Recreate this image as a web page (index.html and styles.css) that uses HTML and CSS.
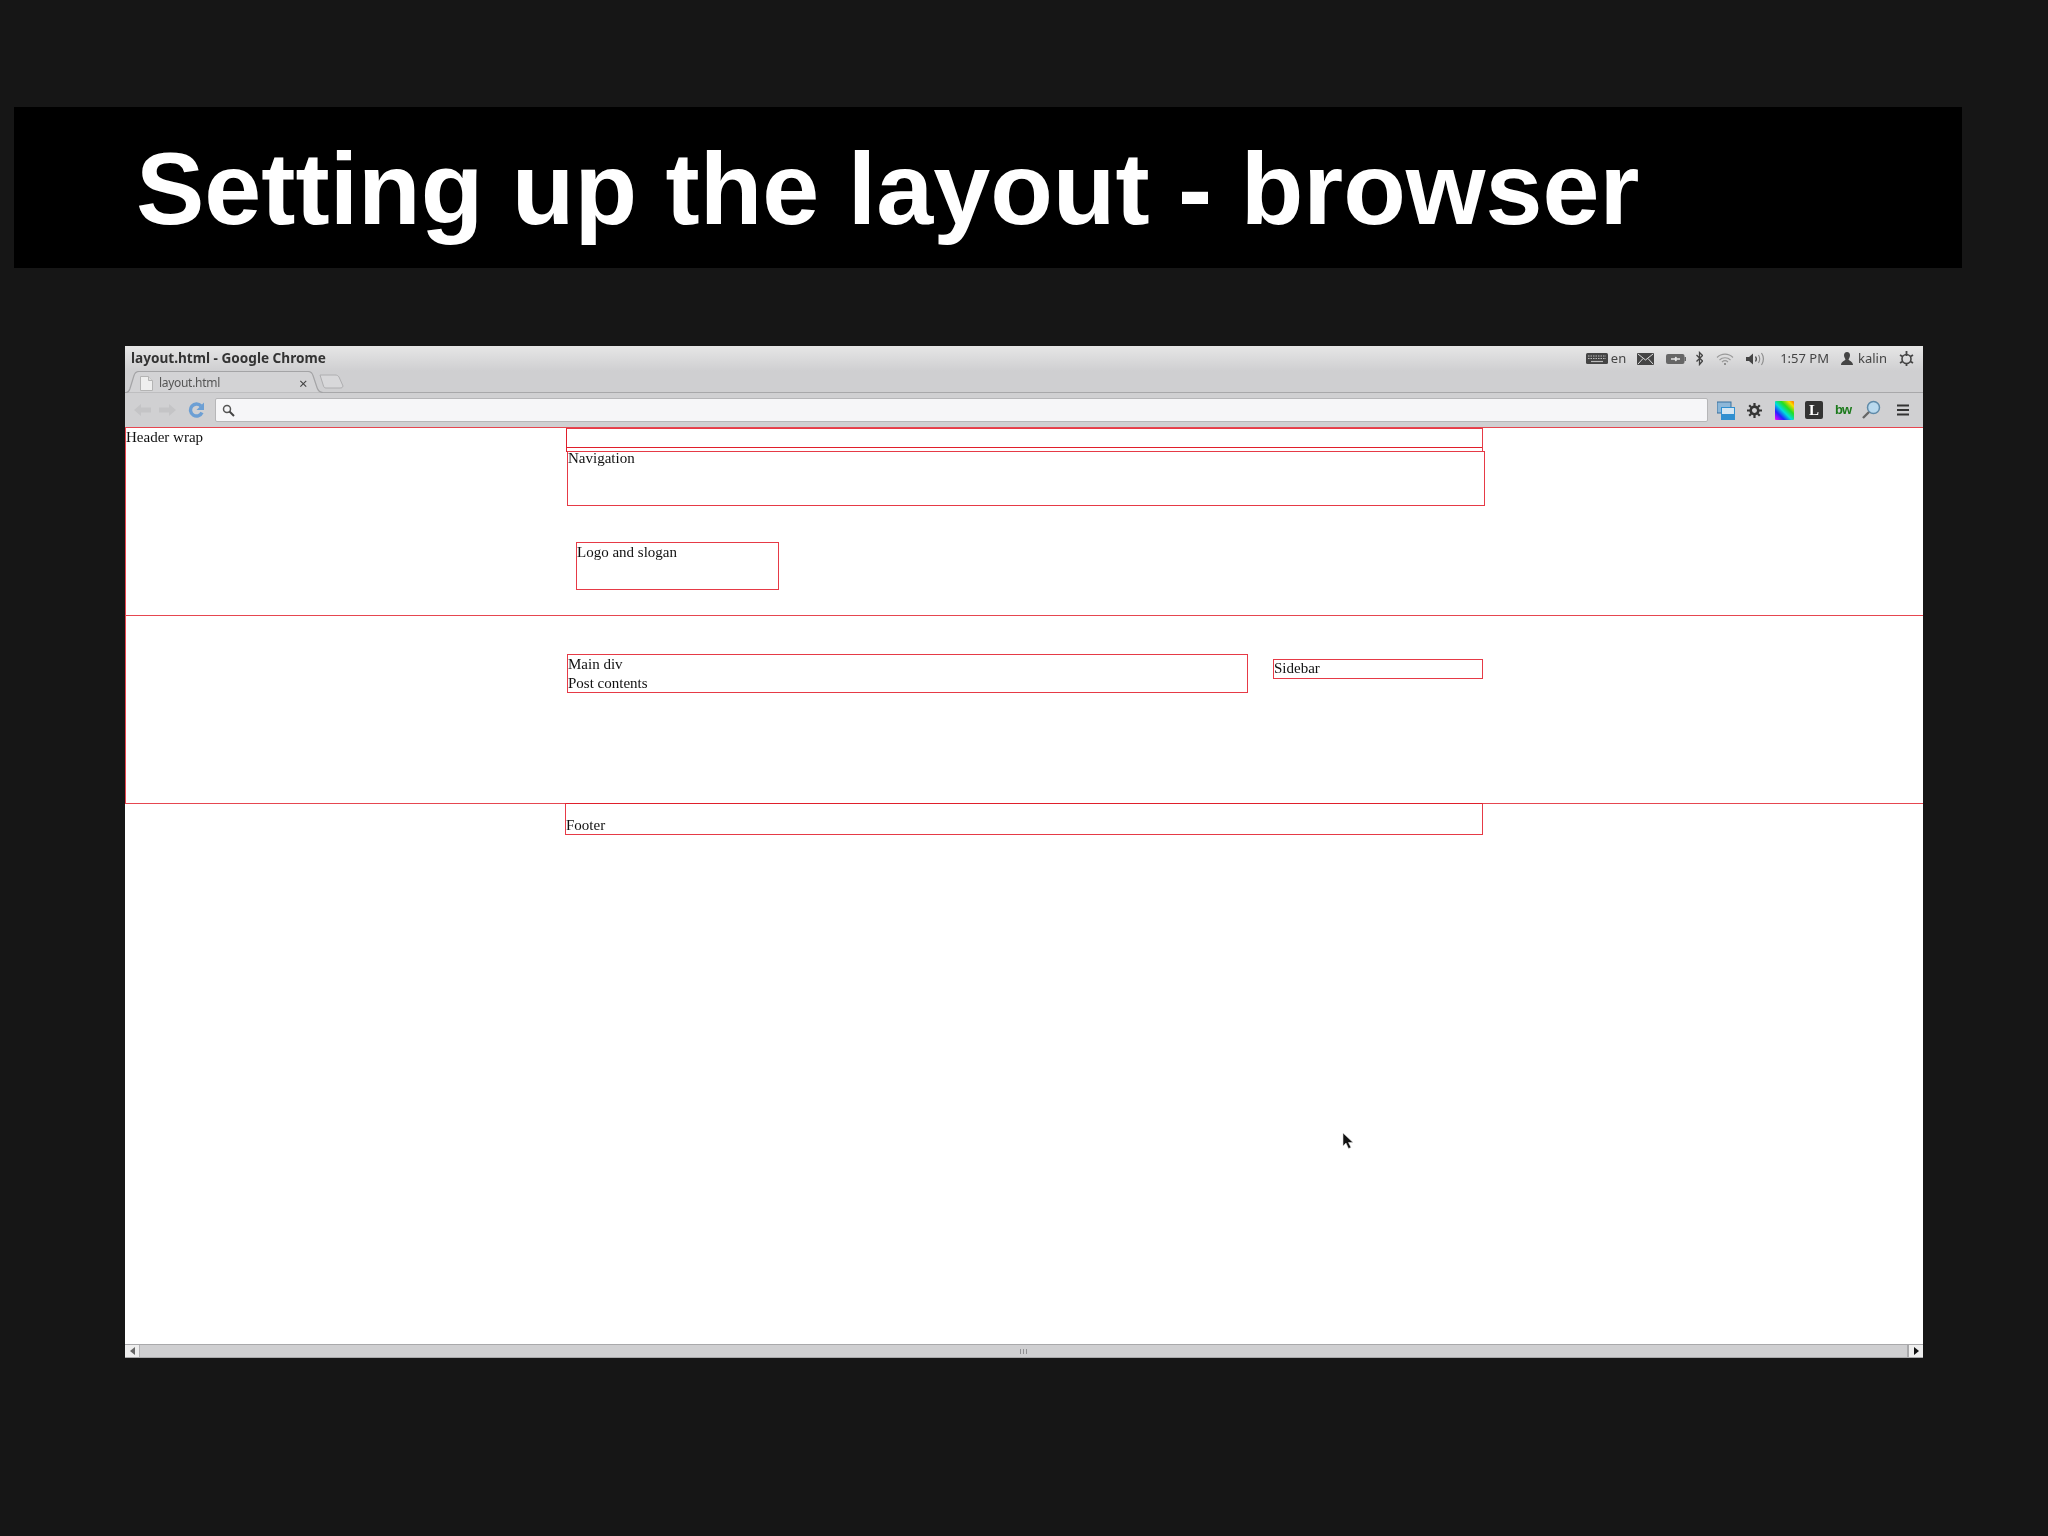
FILE: index.html
```html
<!DOCTYPE html>
<html lang="en">

<head>
    <meta charset="UTF-8">
    <title>Setting up the layout - browser</title>
    <link rel="stylesheet" href="styles.css">
</head>

<body>
    <header class="banner">
        <h1>Setting up the layout - browser</h1>
    </header>

    <section class="window">
        <!-- title bar + system tray -->
        <div class="titlebar">
            <span class="title">layout.html - Google Chrome</span>
            <div class="tray">
                <svg class="t-kbd" width="22" height="11" viewBox="0 0 22 11">
                    <rect width="22" height="11" rx="1.5" fill="#444" />
                    <path d="M2 3h18M2 5.5h18" stroke="#bbb" stroke-width="1" stroke-dasharray="1.5 1" />
                    <path d="M5 8.5h12" stroke="#bbb" stroke-width="1.2" />
                </svg>
                <span class="t-en">en</span>
                <svg class="t-mail" width="17" height="12" viewBox="0 0 17 12">
                    <rect width="17" height="12" rx="1" fill="#444" />
                    <path d="M1 1l7.500 6 7.500-6M1 11l5-5.500M16 11l-5-5.500" stroke="#ddd" stroke-width="1" fill="none" />
                </svg>
                <svg class="t-batt" width="20" height="10" viewBox="0 0 20 10">
                    <rect width="18.500" height="10" rx="2" fill="#666" />
                    <rect x="18.500" y="3" width="1.500" height="4" fill="#666" />
                    <path d="M5 5h4l1-2v2h4l-4 0v2l-1-2z" stroke="#e4e4e4" stroke-width="1.400" fill="none" />
                </svg>
                <svg class="t-bt" width="7" height="15" viewBox="0 0 7 15">
                    <path d="M.5 4l6 6-3 3.500V1.500l3 3-6 6" stroke="#444" stroke-width="1.300" fill="none" />
                </svg>
                <svg class="t-wifi" width="18" height="12" viewBox="0 0 18 12">
                    <path d="M1 4.500c4.500-4.500 11.500-4.500 16 0M3.500 7c3-3 8-3 11 0M6 9c1.800-1.600 4.200-1.600 6 0" stroke="#999" stroke-width="1.100" fill="none" />
                    <circle cx="9" cy="11" r="1" fill="#777" />
                </svg>
                <svg class="t-vol" width="19" height="14" viewBox="0 0 19 14">
                    <path d="M0 5h3l4-3.500v11L3 9H0z" fill="#444" />
                    <path d="M9.500 4.500c1 1.500 1 3.500 0 5" stroke="#444" stroke-width="1.300" fill="none" />
                    <path d="M12.500 3c1.500 2.500 1.500 5.500 0 8M15.500 1c2.500 3.500 2.500 8.500 0 12" stroke="#888" stroke-width="1.100" fill="none" />
                </svg>
                <span class="t-time">1:57 PM</span>
                <svg class="t-user" width="12" height="13" viewBox="0 0 12 13">
                    <path d="M6 0c2 0 3 1.500 3 3.300S8 6.500 7.500 7.500c0 1 4.500 1.800 4.500 5.500H0c0-3.700 4.500-4.500 4.500-5.500C4 6.500 3 5 3 3.300S4 0 6 0z" fill="#444" />
                </svg>
                <span class="t-name">kalin</span>
                <svg class="t-power" width="15" height="15" viewBox="0 0 15 15">
                    <circle cx="7.500" cy="8" r="4.500" stroke="#444" stroke-width="1.600" fill="none" />
                    <path d="M7.500 0v5M1 4l2.500 1.500M14 4l-2.500 1.500M1 12l2.500-1.500M14 12l-2.500-1.500M7.500 13v2" stroke="#444" stroke-width="1.800" />
                </svg>
            </div>
        </div>

        <!-- tabs -->
        <div class="tabstrip">
            <svg class="tab-shape" width="225" height="22" viewBox="0 0 225 22">
                <path d="M0 21.500h1c2 0 3-1 4-4l4-13c1-3 2-4 5-4h169c3 0 4 1 5 4l4 12c1 3 3 5 6 5" fill="#d3d3d5" stroke="#a4a4a6" stroke-width="1.200" />
                <path d="M195 4h15c2 0 3 .6 4 2l4 9c-.5 1.500-1 2-3 2h-14c-1.500 0-2-.7-2.500-2l-3.500-11" fill="#d8d8da" stroke="#aeaeb0" />
            </svg>
            <svg class="favicon" width="13" height="15" viewBox="0 0 13 15">
                <path d="M.5.500h8l4 4v10H.5z" fill="#efefef" stroke="#b4b4b4" />
                <path d="M8.500.500v4h4" fill="#ddd" stroke="#b4b4b4" />
            </svg>
            <span class="tab-label">layout.html</span>
            <span class="tab-close">×</span>
        </div>

        <!-- toolbar -->
        <div class="toolbar">
            <svg class="b-back" width="17" height="14" viewBox="0 0 17 14">
                <path d="M0 7l7-6v3.500h10v5H7V13z" fill="#c4c4c6" />
            </svg>
            <svg class="b-fwd" width="17" height="14" viewBox="0 0 17 14">
                <path d="M17 7l-7-6v3.500H0v5h10V13z" fill="#c4c4c6" />
            </svg>
            <svg class="b-reload" width="16" height="16" viewBox="0 0 16 16">
                <path d="M14 10.500a6 6 0 1 1-1-6.500" stroke="#6c9fd4" stroke-width="3.400" fill="none" />
                <path d="M16 .5v7.500H8.500z" fill="#6c9fd4" />
            </svg>
            <div class="omnibox">
                <svg width="13" height="13" viewBox="0 0 13 13">
                    <circle cx="5" cy="5" r="3.500" stroke="#555" stroke-width="1.500" fill="none" />
                    <path d="M7.500 7.500l4.500 4.500" stroke="#444" stroke-width="2" />
                </svg>
            </div>
            <svg class="e-pic" width="18" height="19" viewBox="0 0 18 19">
                <rect y="1" width="14" height="11" fill="#8db7d8" stroke="#38719f" />
                <rect x="4" y="6" width="14" height="13" fill="#2f8fd0" />
                <rect x="5" y="7" width="12" height="6" fill="#d5e6f2" />
            </svg>
            <svg class="e-gear" width="15" height="15" viewBox="0 0 15 15">
                <circle cx="7.500" cy="7.500" r="3.800" stroke="#333" stroke-width="2.600" fill="none" />
                <path d="M7.500 0v3M7.500 12v3M0 7.500h3M12 7.500h3M2.200 2.200l2 2M10.800 10.800l2 2M12.800 2.200l-2 2M4.200 10.800l-2 2" stroke="#333" stroke-width="2.200" />
            </svg>
            <svg class="e-color" width="19" height="19" viewBox="0 0 19 19">
                <defs>
                    <linearGradient id="rainbow" x1="0" y1="1" x2="1" y2="0">
                        <stop offset="0" stop-color="#f0f" />
                        <stop offset=".25" stop-color="#22f" />
                        <stop offset=".45" stop-color="#0dd" />
                        <stop offset=".65" stop-color="#2d2" />
                        <stop offset=".85" stop-color="#fd0" />
                        <stop offset="1" stop-color="#f60" />
                    </linearGradient>
                </defs>
                <rect width="19" height="19" rx="1" fill="url(#rainbow)" />
            </svg>
            <span class="e-l">L</span>
            <span class="e-bw">bw</span>
            <svg class="e-zoom" width="19" height="20" viewBox="0 0 19 20">
                <circle cx="11.500" cy="7.500" r="6" fill="#b9d9ee" stroke="#5f8aa8" stroke-width="1.500" />
                <path d="M7 12l-6 6" stroke="#666" stroke-width="2.400" />
            </svg>
            <svg class="e-menu" width="12" height="12" viewBox="0 0 12 12">
                <path d="M0 1.500h12M0 6h12M0 10.500h12" stroke="#333" stroke-width="2" />
            </svg>
        </div>

        <!-- page in the browser -->
        <div class="viewport">
            <div class="wrap header-wrap">
                <div class="wrap-label">Header wrap</div>
                <div class="column">
                    <div class="top-bar"><div class="top-bar-inner"></div></div>
                    <div class="box nav"><div class="nav-text">Navigation</div></div>
                    <div class="box logo">Logo and slogan</div>
                </div>
            </div>

            <div class="wrap main-wrap">
                <div class="column main-column">
                    <div class="box main-div">Main div<br>Post contents</div>
                    <div class="box sidebar">Sidebar</div>
                </div>
            </div>

            <div class="box footer">Footer</div>

            <svg class="cursor" width="13" height="18" viewBox="0 0 13 18">
                <path d="M1 1v13l3-3 2.500 5.500 2.500-1L6.500 10.500H11z" fill="#111" stroke="#ddd" stroke-width=".6" />
            </svg>
        </div>

        <!-- bottom scrollbar -->
        <div class="scrollbar">
            <div class="sb-btn"><div class="arrow-left"></div></div>
            <div class="sb-track"><div class="grip"></div></div>
            <div class="sb-btn"><div class="arrow-right"></div></div>
        </div>
    </section>
</body>

</html>
```

FILE: styles.css
```css
* {
    box-sizing: border-box;
}

body {
    margin: 0;
    width: 2048px;
    height: 1536px;
    padding-top: 107px;
    overflow: hidden;
    background-color: #161616;
    font-family: "Liberation Serif", serif;
    font-size: 15px;
    line-height: 18.5px;
    color: #111;
}

/* slide heading */
.banner {
    width: 1948px;
    height: 161px;
    margin-left: 14px;
    padding: 3px 0 0 122px;
    background-color: #000;
    display: flex;
    align-items: center;
}

.banner h1 {
    margin: 0;
    font-family: "Liberation Sans", Arial, sans-serif;
    font-size: 102.5px;
    font-weight: bold;
    line-height: 1;
    color: #fff;
    white-space: nowrap;
}

/* screenshot of the browser */
.window {
    width: 1798px;
    height: 1012px;
    margin: 78px 0 0 125px;
    display: flex;
    flex-direction: column;
    background-color: #fff;
    filter: blur(.4px);
}

.titlebar {
    height: 25px;
    padding: 0 9px 0 6px;
    display: flex;
    align-items: center;
    justify-content: space-between;
    background: linear-gradient(#e6e6e6, #cfcfd1);
    font-family: "Noto Sans", sans-serif;
    font-size: 13px;
    color: #444;
}

.title {
    font-size: 13.6px;
    font-weight: bold;
    color: #333;
}

.tray {
    display: flex;
    align-items: center;
}

.t-en { margin-left: 3px; }
.t-mail { margin-left: 11px; }
.t-batt { margin-left: 12px; }
.t-bt { margin-left: 10px; }
.t-wifi { margin-left: 13px; }
.t-vol { margin-left: 12px; }
.t-time { margin-left: 15px; }
.t-user { margin-left: 12px; }
.t-name { margin-left: 5px; }
.t-power { margin-left: 12px; }

.tabstrip {
    position: relative;
    height: 22px;
    padding-top: 3px;
    display: flex;
    align-items: center;
    background-color: #cfcfd1;
    border-bottom: 1px solid #a8a8aa;
    font-family: "Noto Sans", sans-serif;
    font-size: 12px;
    color: #555;
}

.tab-shape {
    position: absolute;
    left: 0;
    top: 0;
}

.favicon {
    position: relative;
    margin-left: 15px;
}

.tab-label {
    position: relative;
    margin-left: 6px;
    letter-spacing: -.3px;
}

.tab-close {
    position: relative;
    margin-left: 79px;
    font-size: 15px;
    color: #444;
}

.toolbar {
    height: 34px;
    padding-right: 14px;
    display: flex;
    align-items: center;
    background-color: #d0d0d2;
    font-family: "Liberation Serif", serif;
}

.b-back { margin-left: 9px; }
.b-fwd { margin-left: 8px; }
.b-reload { margin-left: 12px; }

.omnibox {
    width: 1495px;
    height: 24px;
    margin-left: 11px;
    padding-left: 6px;
    display: flex;
    align-items: center;
    background-color: #f6f6f8;
    border: 1px solid #b6b6b8;
    border-radius: 2px;
}

.e-pic { margin-left: 9px; }
.e-gear { margin-left: 12px; }
.e-color { margin-left: 13px; }

.e-l {
    width: 18px;
    height: 18px;
    margin-left: 11px;
    background-color: #333;
    border-radius: 2px;
    color: #fff;
    font-weight: bold;
    font-size: 15px;
    line-height: 18px;
    text-align: center;
}

.e-bw {
    width: 17px;
    margin-left: 12px;
    font-family: "Liberation Sans", sans-serif;
    font-weight: bold;
    font-size: 13px;
    letter-spacing: -1px;
    color: #1c7a1c;
}

.e-zoom { margin-left: 10px; }
.e-menu { margin-left: 16px; }

/* the page shown in the browser */
.viewport {
    position: relative;
    flex: 1;
    background-color: #fff;
}

.wrap {
    display: flex;
    border-top: 1.5px solid #e64650;
    border-left: 1.5px solid #e64650;
}

.box {
    border: 1.5px solid #e63a46;
}

.header-wrap {
    height: 188px;
}

.wrap-label {
    width: 440px;
}

.column {
    width: 917px;
}

.top-bar {
    height: 24px;
    border-left: 1.5px solid #e01f2b;
    border-top: 1.5px solid #e63a46;
    border-right: 1.5px solid #e63a46;
}

.top-bar-inner {
    height: 19px;
    border-bottom: 1.5px solid #e01f2b;
}

.nav {
    width: 918px;
    height: 55px;
    margin: -1px 0 0 1px;
}

.nav-text {
    margin: -3px 0 0 0;
}

.logo {
    width: 203px;
    height: 48px;
    margin: 36px 0 0 10px;
}

.main-wrap {
    height: 189px;
    border-bottom: 1.5px solid #e64650;
}

.main-column {
    display: flex;
    align-items: flex-start;
    margin-left: 440px;
    padding-top: 38px;
}

.main-div {
    width: 681px;
    height: 39px;
    margin-left: 1px;
}

.sidebar {
    width: 210px;
    height: 20px;
    margin: 5px 0 0 25px;
    line-height: 17px;
}

.footer {
    width: 918px;
    height: 32px;
    margin: -1px 0 0 440px;
    padding-top: 12px;
    border-top-color: #e01f2b;
}

.cursor {
    position: absolute;
    left: 1217px;
    top: 705px;
}

/* scrollbar */
.scrollbar {
    height: 14px;
    display: flex;
    background-color: #cfcfd1;
    border-top: 1px solid #a9a9ab;
    border-bottom: 1px solid #a9a9ab;
}

.sb-btn {
    width: 14px;
    display: flex;
    align-items: center;
    justify-content: center;
    background-color: #eeeeee;
}

.arrow-left {
    border-right: 5px solid #666;
    border-top: 4px solid transparent;
    border-bottom: 4px solid transparent;
}

.arrow-right {
    border-left: 5px solid #111;
    border-top: 4px solid transparent;
    border-bottom: 4px solid transparent;
}

.sb-track {
    flex: 1;
    display: flex;
    align-items: center;
    justify-content: center;
    border-left: 1px solid #b4b4b6;
    border-right: 2px solid #a9a9ab;
}

.grip {
    width: 7px;
    height: 5px;
    border-left: 1px solid #8f8f91;
    border-right: 1px solid #8f8f91;
    background: linear-gradient(90deg, transparent 2px, #8f8f91 2px, #8f8f91 3px, transparent 3px);
}
```
